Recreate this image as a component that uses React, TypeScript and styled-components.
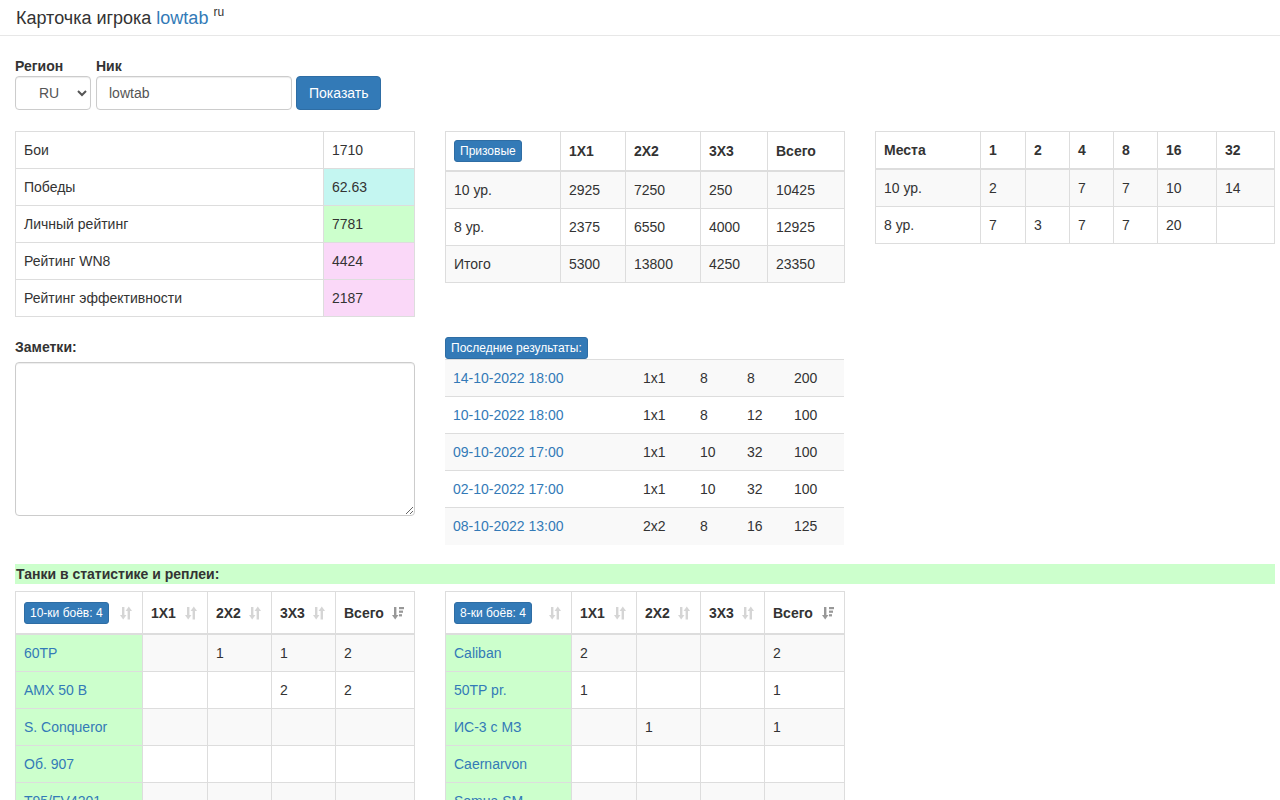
import React from "react";
import styled, { createGlobalStyle } from "styled-components";

const GlobalStyle = createGlobalStyle`
  html { overflow: hidden; }
  body {
    margin: 0;
    font-family: "Liberation Sans", Arial, Helvetica, sans-serif;
    font-size: 14px;
    line-height: 1.42857;
    color: #333;
    background: #fff;
  }
  * { box-sizing: border-box; }
`;

const Header = styled.div`
  height: 36px;
  padding: 7px 16px 0;
  border-bottom: 1px solid #e7e7e7;
  font-size: 18px;
  line-height: 22px;
  color: #333;
`;

const Link = styled.a`
  color: #337ab7;
  text-decoration: none;
`;

const Sup = styled.sup`
  font-size: 12px;
  margin-left: 5px;
  vertical-align: top;
  position: relative;
  top: -6px;
`;

const Main = styled.div`
  width: 1260px;
  margin-left: 15px;
`;

const Form = styled.div`
  margin-top: 20px;
  display: flex;
  align-items: flex-end;
  gap: 4px;
`;

const Field = styled.div<{ $ml?: number }>`
  display: flex;
  flex-direction: column;
  margin-left: ${(p) => p.$ml ?? 0}px;
`;

const Label = styled.label<{ $mb?: number }>`
  font-weight: bold;
  line-height: 20px;
  display: block;
  margin-bottom: ${(p) => p.$mb ?? 0}px;
`;

const Select = styled.select`
  width: 76px;
  height: 34px;
  padding: 6px 8px 6px 12px;
  font-family: inherit;
  font-size: 14px;
  color: #555;
  border: 1px solid #ccc;
  border-radius: 4px;
  background: #fff;
  box-shadow: inset 0 1px 1px rgba(0, 0, 0, 0.075);
  text-align: center;
`;

const Input = styled.input`
  width: 196px;
  height: 34px;
  padding: 6px 12px;
  font-family: inherit;
  font-size: 14px;
  color: #555;
  border: 1px solid #ccc;
  border-radius: 4px;
  box-shadow: inset 0 1px 1px rgba(0, 0, 0, 0.075);
`;

const Button = styled.button`
  height: 34px;
  width: 85px;
  padding: 6px 12px;
  font-family: inherit;
  font-size: 14px;
  color: #fff;
  background: #337ab7;
  border: 1px solid #2e6da4;
  border-radius: 4px;
`;

const Grid = styled.div<{ $cols: number; $mt: number }>`
  display: grid;
  grid-template-columns: repeat(${(p) => p.$cols}, 400px);
  column-gap: 30px;
  margin-top: ${(p) => p.$mt}px;
  align-items: start;
`;

const Col = styled.div`
  display: flex;
  flex-direction: column;
  align-items: flex-start;
`;

const Table = styled.table<{ $bordered?: boolean }>`
  width: 399px;
  table-layout: fixed;
  border-collapse: collapse;
  border: ${(p) => (p.$bordered ? "1px solid #ddd" : "none")};
`;

const Tr = styled.tr<{ $striped?: boolean }>`
  background: ${(p) => (p.$striped ? "#f9f9f9" : "transparent")};
`;

const Th = styled.th<{ $bordered?: boolean; $sortable?: boolean }>`
  position: relative;
  text-align: left;
  font-weight: bold;
  vertical-align: middle;
  padding: ${(p) => (p.$sortable ? "9px 8px 8px" : "8px")};
  line-height: 20px;
  border: ${(p) => (p.$bordered ? "1px solid #ddd" : "none")};
  border-bottom: 2px solid #ddd;
  height: ${(p) => (p.$sortable ? "43px" : "auto")};
  white-space: nowrap;
`;

const Td = styled.td<{ $bordered?: boolean; $bg?: string }>`
  padding: 8px;
  line-height: 20px;
  height: 37px;
  vertical-align: top;
  border: ${(p) => (p.$bordered ? "1px solid #ddd" : "none")};
  border-top: 1px solid #ddd;
  background: ${(p) => p.$bg ?? "transparent"};
  white-space: nowrap;
  overflow: hidden;
`;

const Badge = styled.span`
  display: inline-block;
  padding: 1px 5px;
  font-size: 12px;
  font-weight: normal;
  line-height: 18px;
  color: #fff;
  background: #337ab7;
  border: 1px solid #2e6da4;
  border-radius: 3px;
  white-space: nowrap;
  vertical-align: middle;
`;

const SortIcon = styled.svg<{ $active?: boolean }>`
  position: absolute;
  right: 10px;
  top: 50%;
  margin-top: -6px;
  width: 12px;
  height: 14px;
  fill: #333;
  opacity: ${(p) => (p.$active ? 0.5 : 0.2)};
`;

const Textarea = styled.textarea`
  width: 400px;
  height: 154px;
  border: 1px solid #ccc;
  border-radius: 4px;
  box-shadow: inset 0 1px 1px rgba(0, 0, 0, 0.075);
  padding: 6px 12px;
  font-family: inherit;
  font-size: 14px;
`;

const GreenBar = styled.div`
  margin-top: 19px;
  background: #ccffcc;
  font-weight: bold;
  line-height: 20px;
  height: 20px;
  padding-left: 1px;
`;

const Sort = ({ active }: { active?: boolean }) => (
  <SortIcon $active={active} viewBox="0 0 12 14">
    <rect x="2" y="1" width="2.4" height="9" />
    <polygon points="0,9 6.4,9 3.2,13.5" />
    {active ? (
      <>
        <rect x="7" y="1" width="5" height="2.2" />
        <rect x="7" y="4.6" width="4" height="2.2" />
        <rect x="7" y="8.2" width="3" height="2.2" />
      </>
    ) : (
      <>
        <polygon points="5.6,5 12,5 8.8,0.5" />
        <rect x="7.6" y="4" width="2.4" height="9.5" />
      </>
    )}
  </SortIcon>
);

const Cols = ({ widths }: { widths: number[] }) => (
  <colgroup>
    {widths.map((w, i) => (
      <col key={i} style={{ width: w }} />
    ))}
  </colgroup>
);

const stats: [string, string, string | undefined][] = [
  ["Бои", "1710", undefined],
  ["Победы", "62.63", "#c4f6f1"],
  ["Личный рейтинг", "7781", "#ccffcc"],
  ["Рейтинг WN8", "4424", "#fad8f8"],
  ["Рейтинг эффективности", "2187", "#fad8f8"],
];

const prizes = [
  ["10 ур.", "2925", "7250", "250", "10425"],
  ["8 ур.", "2375", "6550", "4000", "12925"],
  ["Итого", "5300", "13800", "4250", "23350"],
];

const places = [
  ["10 ур.", "2", "", "7", "7", "10", "14"],
  ["8 ур.", "7", "3", "7", "7", "20", ""],
];

const results = [
  ["14-10-2022 18:00", "1x1", "8", "8", "200"],
  ["10-10-2022 18:00", "1x1", "8", "12", "100"],
  ["09-10-2022 17:00", "1x1", "10", "32", "100"],
  ["02-10-2022 17:00", "1x1", "10", "32", "100"],
  ["08-10-2022 13:00", "2x2", "8", "16", "125"],
];

const tanks10 = [
  ["60TP", "", "1", "1", "2"],
  ["AMX 50 B", "", "", "2", "2"],
  ["S. Conqueror", "", "", "", ""],
  ["Об. 907", "", "", "", ""],
  ["T95/FV4201", "", "", "", ""],
];

const tanks8 = [
  ["Caliban", "2", "", "", "2"],
  ["50TP pr.", "1", "", "", "1"],
  ["ИС-3 с МЗ", "", "1", "", "1"],
  ["Caernarvon", "", "", "", ""],
  ["Somua SM", "", "", "", ""],
];

const TankTable = ({
  title,
  widths,
  rows,
}: {
  title: string;
  widths: number[];
  rows: string[][];
}) => (
  <Table $bordered>
    <Cols widths={widths} />
    <thead>
      <tr>
        <Th $bordered $sortable>
          <Badge>{title}</Badge>
          <Sort />
        </Th>
        {["1X1", "2X2", "3X3"].map((h) => (
          <Th key={h} $bordered $sortable>
            {h}
            <Sort />
          </Th>
        ))}
        <Th $bordered $sortable>
          Всего
          <Sort active />
        </Th>
      </tr>
    </thead>
    <tbody>
      {rows.map((r, i) => (
        <Tr key={i} $striped={i % 2 === 0}>
          <Td $bordered $bg="#ccffcc">
            <Link href="#">{r[0]}</Link>
          </Td>
          {r.slice(1).map((c, j) => (
            <Td key={j} $bordered>
              {c}
            </Td>
          ))}
        </Tr>
      ))}
    </tbody>
  </Table>
);

export default function App() {
  return (
    <>
      <GlobalStyle />
      <Header>
        Карточка игрока <Link href="#">lowtab</Link>
        <Sup>ru</Sup>
      </Header>
      <Main>
        <Form>
          <Field>
            <Label>Регион</Label>
            <Select defaultValue="RU">
              <option>RU</option>
              <option>EU</option>
            </Select>
          </Field>
          <Field $ml={1}>
            <Label>Ник</Label>
            <Input defaultValue="lowtab" />
          </Field>
          <Button>Показать</Button>
        </Form>

        <Grid $cols={3} $mt={21}>
          <Col>
            <Table $bordered>
              <Cols widths={[308, 91]} />
              <tbody>
                {stats.map(([k, v, bg]) => (
                  <tr key={k}>
                    <Td $bordered>{k}</Td>
                    <Td $bordered $bg={bg}>
                      {v}
                    </Td>
                  </tr>
                ))}
              </tbody>
            </Table>
          </Col>
          <Col>
            <Table $bordered>
              <Cols widths={[115, 65, 75, 67, 77]} />
              <thead>
                <tr>
                  <Th $bordered>
                    <Badge>Призовые</Badge>
                  </Th>
                  {["1X1", "2X2", "3X3", "Всего"].map((h) => (
                    <Th key={h} $bordered>
                      {h}
                    </Th>
                  ))}
                </tr>
              </thead>
              <tbody>
                {prizes.map((r, i) => (
                  <Tr key={i} $striped={i % 2 === 0}>
                    {r.map((c, j) => (
                      <Td key={j} $bordered>
                        {c}
                      </Td>
                    ))}
                  </Tr>
                ))}
              </tbody>
            </Table>
          </Col>
          <Col>
            <Table $bordered>
              <Cols widths={[105, 45, 44, 44, 44, 59, 58]} />
              <thead>
                <tr>
                  {["Места", "1", "2", "4", "8", "16", "32"].map((h) => (
                    <Th key={h} $bordered>
                      {h}
                    </Th>
                  ))}
                </tr>
              </thead>
              <tbody>
                {places.map((r, i) => (
                  <Tr key={i} $striped={i % 2 === 0}>
                    {r.map((c, j) => (
                      <Td key={j} $bordered>
                        {c}
                      </Td>
                    ))}
                  </Tr>
                ))}
              </tbody>
            </Table>
          </Col>
        </Grid>

        <Grid $cols={2} $mt={20}>
          <Col>
            <Label $mb={5}>Заметки:</Label>
            <Textarea />
          </Col>
          <Col>
            <Badge>Последние результаты:</Badge>
            <Table>
              <Cols widths={[190, 57, 47, 47, 58]} />
              <tbody>
                {results.map((r, i) => (
                  <Tr key={i} $striped={i % 2 === 0}>
                    <Td>
                      <Link href="#">{r[0]}</Link>
                    </Td>
                    {r.slice(1).map((c, j) => (
                      <Td key={j}>{c}</Td>
                    ))}
                  </Tr>
                ))}
              </tbody>
            </Table>
          </Col>
        </Grid>

        <GreenBar>Танки в статистике и реплеи:</GreenBar>

        <Grid $cols={2} $mt={7}>
          <TankTable title="10-ки боёв: 4" widths={[127, 65, 64, 64, 79]} rows={tanks10} />
          <TankTable title="8-ки боёв: 4" widths={[126, 65, 64, 64, 80]} rows={tanks8} />
        </Grid>
      </Main>
    </>
  );
}
